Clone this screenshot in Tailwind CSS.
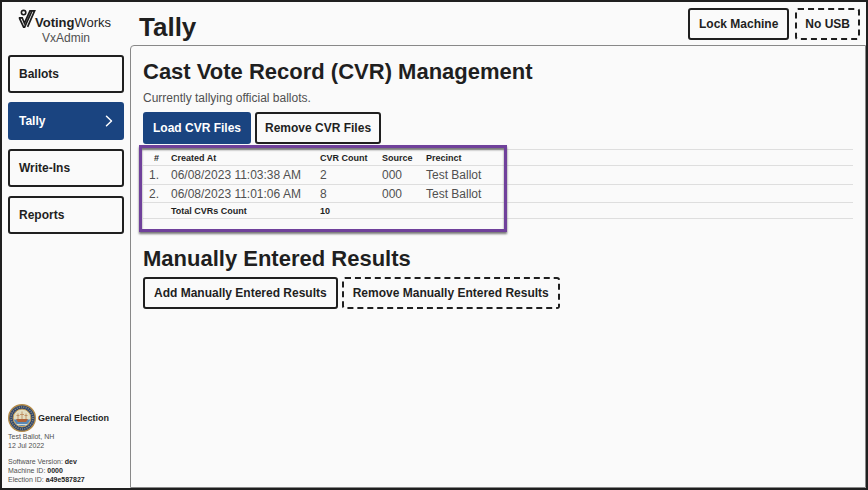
<!DOCTYPE html>
<html lang="en">
<head>
<meta charset="utf-8">
<meta name="viewport" content="width=device-width, initial-scale=1">
<title>VxAdmin – Tally</title>
<script src="https://cdn.jsdelivr.net/npm/@tailwindcss/browser@4"></script>
</head>
<body class="flex min-h-screen border-2 border-[#1f1f1f] bg-[#fafafa] font-['Liberation_Sans',Arial,sans-serif] text-[12px] leading-4 text-[#505050]">
  <aside class="flex w-32 shrink-0 flex-col justify-between px-[6px] pb-1 pt-[7px]">
    <div>
      <div class="flex h-[36px] flex-col items-center">
        <div class="flex w-full items-start pl-[10px] text-[13px] leading-[28px] text-[#1f1f1f]">
          <svg class="h-5 w-[18px] shrink-0" viewBox="0 0 18 20" fill="none" stroke="#1c1c1c" aria-hidden="true">
            <circle cx="5.6" cy="3.6" r="2.2" stroke-width="1.6"/>
            <path d="M.8 8.8 H4.2 L6.4 14.2 L12 1.8 H16.6 L9.6 17.8 M1.4 9.2 L5.6 18.2 H6.6 L14 2" stroke-width="1.7"/>
          </svg>
          <span class="-ml-[1px]"><b>Voting</b>Works</span>
        </div>
        <div class="-mt-[7px] text-[12px] leading-4">VxAdmin</div>
      </div>
      <nav class="mt-[10px] flex flex-col gap-[9px] text-[12px] font-bold text-[#1f1f1f]">
        <a href="#" class="flex h-[38px] items-center rounded-[3px] border-2 border-[#1f1f1f] px-[9px]">Ballots</a>
        <a href="#" aria-current="page" class="flex h-[38px] items-center justify-between rounded-[3px] border-2 border-[#1a4480] bg-[#1a4480] px-[9px] text-white">Tally
          <svg class="h-3 w-2" viewBox="0 0 8 12" fill="none" stroke="currentColor" stroke-width="1.5" stroke-linecap="round" stroke-linejoin="round" aria-hidden="true"><path d="M1.5 1.2 L6.5 6 L1.5 10.8"/></svg>
        </a>
        <a href="#" class="flex h-[38px] items-center rounded-[3px] border-2 border-[#1f1f1f] px-[9px]">Write-Ins</a>
        <a href="#" class="flex h-[38px] items-center rounded-[3px] border-2 border-[#1f1f1f] px-[9px]">Reports</a>
      </nav>
    </div>
    <footer class="text-[7px] leading-[9px]">
      <div class="flex items-center gap-[2px]">
        <svg class="size-7 shrink-0" viewBox="0 0 28 28" role="img" aria-label="State seal">
          <circle cx="14" cy="14" r="13.3" fill="#30456f" stroke="#b58c48" stroke-width="1.4"/>
          <circle cx="14" cy="14" r="11" fill="none" stroke="#8f947f" stroke-width="1.6" stroke-dasharray="1 1.3"/>
          <circle cx="14" cy="14" r="8.9" fill="#e3dec2" stroke="#c09a50"/>
          <path d="M5.8 15.5h16.4a8.4 8.4 0 0 1-16.4 0" fill="#5987b5"/>
          <path d="M8 15h12l-2 3h-8z" fill="#b0643a"/>
          <path d="M10 15V9.5M14 15V7.5M18 15V9.5M8.5 11.5h3M12 10.5h4M16.5 11.5h3" stroke="#b98556" stroke-width=".8"/>
          <path d="M9 20.5h10" stroke="#d3dcd9"/>
        </svg>
        <b class="whitespace-nowrap text-[9px] text-[#1f1f1f]">General Election</b>
      </div>
      <p>Test Ballot, NH</p>
      <p>12 Jul 2022</p>
      <p class="mt-[7px]">Software Version: <b class="text-[#1f1f1f]">dev</b></p>
      <p>Machine ID: <b class="text-[#1f1f1f]">0000</b></p>
      <p>Election ID: <b class="text-[#1f1f1f]">a49e587827</b></p>
    </footer>
  </aside>
  <div class="flex min-w-0 grow flex-col">
    <header class="flex h-[43px] items-center justify-between pl-[9px] pr-[6px] text-[#1f1f1f]">
      <h1 class="pt-[7px] text-[26px] font-bold leading-8">Tally</h1>
      <div class="flex gap-[6px]">
        <button class="h-8 rounded-[3px] border-2 border-[#1f1f1f] px-[9px] font-bold">Lock Machine</button>
        <button disabled class="h-8 rounded-[3px] border-2 border-dashed border-[#1f1f1f] px-[8px] font-bold">No USB</button>
      </div>
    </header>
    <main class="grow rounded-tl-[4px] border border-[#888] px-3">
      <h2 class="mt-[13px] text-[22px] font-bold leading-[26px] text-[#1f1f1f]">Cast Vote Record (CVR) Management</h2>
      <p class="mt-[5px]">Currently tallying official ballots.</p>
      <div class="mt-[6px] flex gap-1 font-bold text-[#1f1f1f]">
        <button class="h-8 rounded-[3px] border-2 border-[#1a4480] bg-[#1a4480] px-2 text-white">Load CVR Files</button>
        <button class="h-8 rounded-[3px] border-2 border-[#1f1f1f] px-2">Remove CVR Files</button>
      </div>
      <div class="relative mt-[5px]">
        <table class="w-full table-fixed border-collapse border-y border-[#dedede] text-left">
          <colgroup><col class="w-[22px]"><col class="w-[149px]"><col class="w-[62px]"><col class="w-[44px]"><col></colgroup>
          <thead class="text-[9px] text-[#1f1f1f]">
            <tr class="h-4 border-b border-[#dedede] leading-[14px]"><th class="pr-[6px] text-right">#</th><th class="pl-[6px]">Created At</th><th class="pl-[6px]">CVR Count</th><th class="pl-[6px]">Source</th><th class="pl-[6px]">Precinct</th></tr>
          </thead>
          <tbody>
            <tr class="h-[19px] border-b border-[#dedede]"><td class="pr-[6px] text-right">1.</td><td class="pl-[6px]">06/08/2023 11:03:38 AM</td><td class="pl-[6px]">2</td><td class="pl-[6px]">000</td><td class="pl-[6px]">Test Ballot</td></tr>
            <tr class="h-[18px] border-b border-[#dedede]"><td class="pr-[6px] text-right">2.</td><td class="pl-[6px]">06/08/2023 11:01:06 AM</td><td class="pl-[6px]">8</td><td class="pl-[6px]">000</td><td class="pl-[6px]">Test Ballot</td></tr>
          </tbody>
          <tfoot class="text-[9px] text-[#1f1f1f]">
            <tr class="h-4 leading-[14px]"><td></td><th class="pl-[6px]">Total CVRs Count</th><th class="pl-[6px]">10</th><td></td><td></td></tr>
          </tfoot>
        </table>
        <div class="pointer-events-none absolute -left-1 -top-1 h-[87px] w-[368px] border-[3px] border-[#70419b] shadow-[0_2px_2px_#777,inset_0_2px_2px_#777]"></div>
      </div>
      <h2 class="mt-[27px] text-[22px] font-bold leading-[26px] text-[#1f1f1f]">Manually Entered Results</h2>
      <div class="mt-[5px] flex gap-1 font-bold text-[#1f1f1f]">
        <button class="h-8 rounded-[3px] border-2 border-[#1f1f1f] px-[9px]">Add Manually Entered Results</button>
        <button disabled class="h-8 rounded-[3px] border-2 border-dashed border-[#1f1f1f] px-[9px]">Remove Manually Entered Results</button>
      </div>
    </main>
  </div>
</body>
</html>
